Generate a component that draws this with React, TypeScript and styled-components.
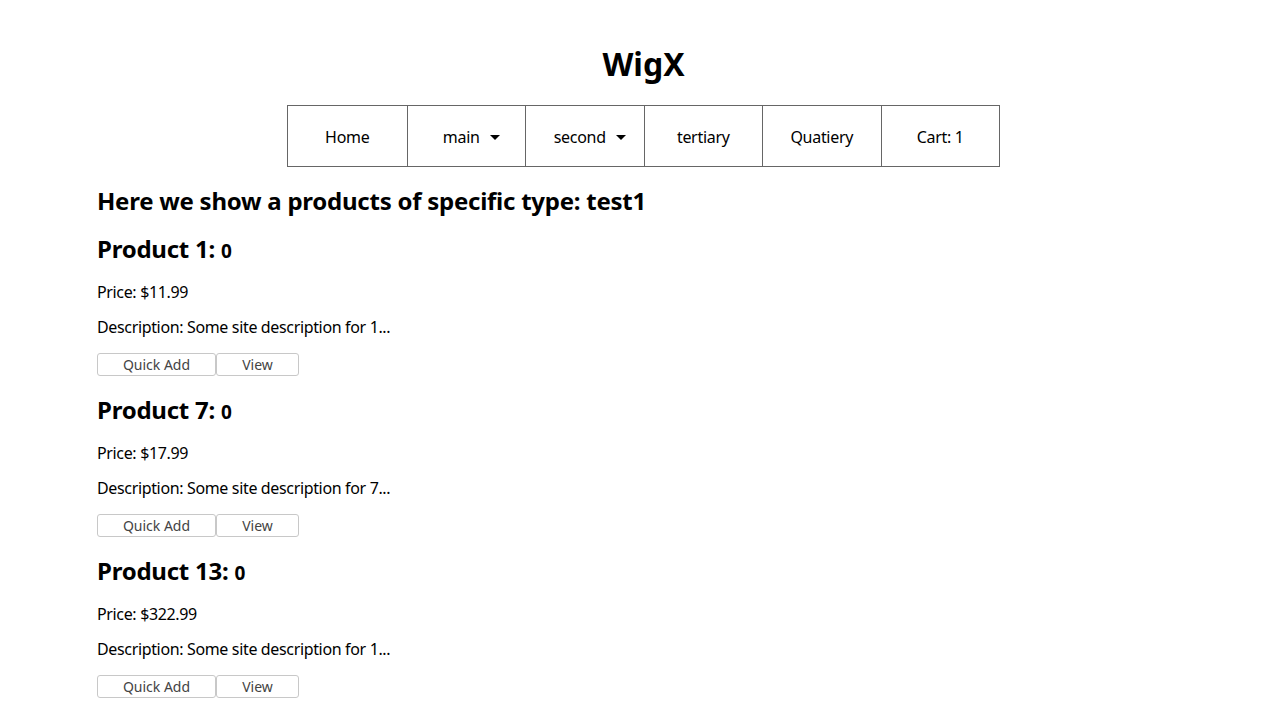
import React from "react";
import styled, { createGlobalStyle } from "styled-components";

const GlobalStyle = createGlobalStyle`
body {
  margin: 8px;
  font-family: "Noto Sans", "Open Sans", sans-serif;
  color: #000;
  background: #fff;
}
`;

interface IProduct {
  id: number;
  price: string;
  description: string;
}

const products: IProduct[] = [
  { id: 1, price: "$11.99", description: "Some site description for 1..." },
  { id: 7, price: "$17.99", description: "Some site description for 7..." },
  { id: 13, price: "$322.99", description: "Some site description for 1..." },
];

const navItems = [
  { label: "Home", dropdown: false },
  { label: "main", dropdown: true },
  { label: "second", dropdown: true },
  { label: "tertiary", dropdown: false },
  { label: "Quatiery", dropdown: false },
  { label: "Cart: 1", dropdown: false },
];

const App = () => {
  return (
    <>
      <GlobalStyle />
      <Header>
        <Title>WigX</Title>
        <Nav>
          {navItems.map((item) => (
            <NavItem key={item.label} $dropdown={item.dropdown}>
              {item.label}
              {item.dropdown && <Caret />}
            </NavItem>
          ))}
        </Nav>
      </Header>
      <Main>
        <PageHeading>Here we show a products of specific type: test1</PageHeading>
        {products.map((p) => (
          <section key={p.id}>
            <ProductTitle>
              Product {p.id}: <Count>0</Count>
            </ProductTitle>
            <Text>Price: {p.price}</Text>
            <Text>Description: {p.description}</Text>
            <Actions>
              <Button $width={119}>Quick Add</Button>
              <Button $width={83}>View</Button>
            </Actions>
          </section>
        ))}
      </Main>
    </>
  );
};

export default App;

const Header = styled.header`
display: flex;
flex-direction: column;
align-items: center;
padding-top: 16px;
`;

const Title = styled.h1`
font-size: 32px;
font-weight: 700;
margin: 21px 0 23px;
line-height: 37px;
`;

const Nav = styled.nav`
display: flex;
border: 1px solid #666;
`;

const NavItem = styled.div<{ $dropdown: boolean }>`
width: 118.5px;
height: 60px;
display: flex;
align-items: center;
justify-content: center;
gap: 10px;
padding-top: 2px;
padding-left: ${(p) => (p.$dropdown ? "10px" : "0")};
box-sizing: border-box;
font-size: 16px;
letter-spacing: -0.3px;
& + & {
  border-left: 1px solid #666;
}
`;

const Caret = styled.span`
width: 0;
height: 0;
border-left: 5px solid transparent;
border-right: 5px solid transparent;
border-top: 5px solid #000;
`;

const Main = styled.main`
padding: 0 89px;
`;

const PageHeading = styled.h2`
font-size: 24px;
line-height: 28px;
letter-spacing: -0.25px;
margin: 20px 0;
`;

const ProductTitle = styled.h2`
font-size: 24px;
line-height: 28px;
letter-spacing: -0.25px;
margin: 20px 0 18px;
`;

const Count = styled.span`
font-size: 19px;
`;

const Text = styled.p`
font-size: 16px;
line-height: 19px;
letter-spacing: -0.35px;
margin: 16px 0;
`;

const Actions = styled.div`
display: flex;
`;

const Button = styled.button<{ $width: number }>`
width: ${(p) => p.$width}px;
height: 23px;
padding: 0;
background: #fff;
border: 1px solid #c8c8c8;
border-radius: 3px;
color: #444;
font-family: "Noto Sans", sans-serif;
font-size: 14px;
`;
